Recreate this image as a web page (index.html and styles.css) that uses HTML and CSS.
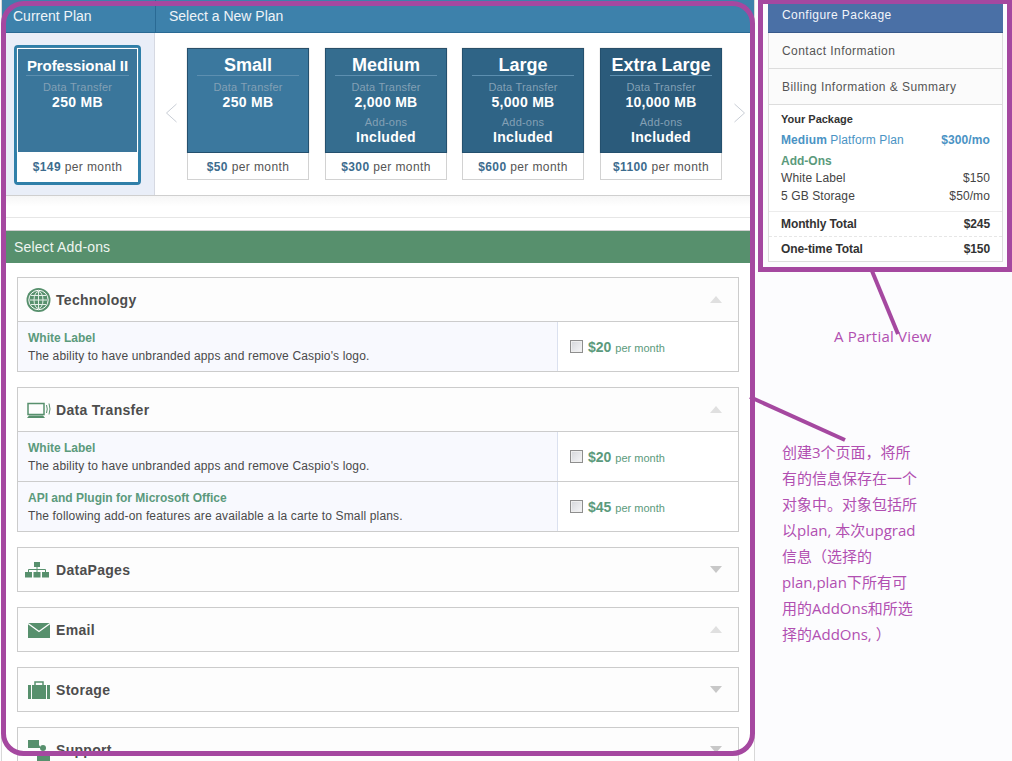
FILE: index.html
```html
<!DOCTYPE html>
<html lang="en">
<head>
  <meta charset="UTF-8">
  <meta name="viewport" content="width=device-width, initial-scale=1.0">
  <title>Upgrade Plan</title>
  <link rel="stylesheet" href="styles.css">
</head>
<body>

<div class="page">
  <div class="main">
    <!-- Plan picker -->
    <div class="plan-head">
      <div class="plan-head-current">Current Plan</div>
      <div class="plan-head-new">Select a New Plan</div>
    </div>
    <div class="plan-row">
      <div class="plan-current">
        <div class="current-card">
          <div class="plan-blue plan-tone0">
            <div class="plan-name plan-name-small">Professional II</div>
            <div class="plan-label">Data Transfer</div>
            <div class="plan-value">250 MB</div>
          </div>
          <div class="plan-price"><b>$149</b> per month</div>
        </div>
      </div>
      <div class="plan-list">
        <svg class="chevron" width="13" height="20" viewBox="0 0 13 20"><path d="M11.5 1 L1.5 10 L11.5 19" fill="none" stroke="#c9ced6"/></svg>
        <div class="plan-card">
          <div class="plan-blue plan-tone1">
            <div class="plan-name">Small</div>
            <div class="plan-label">Data Transfer</div>
            <div class="plan-value">250 MB</div>
          </div>
          <div class="plan-price"><b>$50</b> per month</div>
        </div>
        <div class="plan-card">
          <div class="plan-blue plan-tone2">
            <div class="plan-name">Medium</div>
            <div class="plan-label">Data Transfer</div>
            <div class="plan-value">2,000 MB</div>
            <div class="plan-label plan-label-gap">Add-ons</div>
            <div class="plan-value">Included</div>
          </div>
          <div class="plan-price"><b>$300</b> per month</div>
        </div>
        <div class="plan-card">
          <div class="plan-blue plan-tone3">
            <div class="plan-name">Large</div>
            <div class="plan-label">Data Transfer</div>
            <div class="plan-value">5,000 MB</div>
            <div class="plan-label plan-label-gap">Add-ons</div>
            <div class="plan-value">Included</div>
          </div>
          <div class="plan-price"><b>$600</b> per month</div>
        </div>
        <div class="plan-card">
          <div class="plan-blue plan-tone4">
            <div class="plan-name">Extra Large</div>
            <div class="plan-label">Data Transfer</div>
            <div class="plan-value">10,000 MB</div>
            <div class="plan-label plan-label-gap">Add-ons</div>
            <div class="plan-value">Included</div>
          </div>
          <div class="plan-price"><b>$1100</b> per month</div>
        </div>
        <svg class="chevron" width="13" height="20" viewBox="0 0 13 20"><path d="M1.5 1 L11.5 10 L1.5 19" fill="none" stroke="#c9ced6"/></svg>
      </div>
    </div>
    <div class="spacer-top"></div>
    <div class="spacer-bottom"></div>

    <!-- Add-ons -->
    <div class="addons-head">Select Add-ons</div>
    <div class="addons">

      <div class="addon">
        <div class="addon-head">
          <svg class="addon-icon" width="28" height="26" viewBox="0 0 28 26">
            <circle cx="13.5" cy="13" r="12" fill="#57906d"/>
            <circle cx="13.5" cy="13" r="9.7" fill="none" stroke="#fff" stroke-width="1"/>
            <g fill="none" stroke="#e4efe8" stroke-width="1">
              <ellipse cx="13.5" cy="13" rx="4.5" ry="8.5"/>
              <path d="M13.5 4 V22 M5 13 H22 M6 8.5 H21 M6 17.5 H21"/>
            </g>
          </svg>
          <span class="addon-title">Technology</span>
          <span class="arrow-up"></span>
        </div>
        <div class="addon-row">
          <div class="addon-info">
            <div class="addon-name">White Label</div>
            <div class="addon-desc">The ability to have unbranded apps and remove Caspio's logo.</div>
          </div>
          <label class="addon-price"><input type="checkbox"><b>$20</b> <span>per month</span></label>
        </div>
      </div>

      <div class="addon">
        <div class="addon-head">
          <svg class="addon-icon" width="28" height="26" viewBox="0 0 28 26">
            <rect x="3" y="6.5" width="16" height="11" fill="none" stroke="#57906d" stroke-width="1.5"/>
            <path d="M2 21 L4 18.5 H18 L20 21 Z" fill="#57906d"/>
            <path d="M21.5 8 Q23 12 21.5 16 M24 6.5 Q26 12 24 17.5" fill="none" stroke="#57906d"/>
          </svg>
          <span class="addon-title">Data Transfer</span>
          <span class="arrow-up"></span>
        </div>
        <div class="addon-row">
          <div class="addon-info">
            <div class="addon-name">White Label</div>
            <div class="addon-desc">The ability to have unbranded apps and remove Caspio's logo.</div>
          </div>
          <label class="addon-price"><input type="checkbox"><b>$20</b> <span>per month</span></label>
        </div>
        <div class="addon-row">
          <div class="addon-info">
            <div class="addon-name">API and Plugin for Microsoft Office</div>
            <div class="addon-desc">The following add-on features are available a la carte to Small plans.</div>
          </div>
          <label class="addon-price"><input type="checkbox"><b>$45</b> <span>per month</span></label>
        </div>
      </div>

      <div class="addon">
        <div class="addon-head">
          <svg class="addon-icon" width="28" height="26" viewBox="0 0 28 26">
            <g fill="#57906d">
              <rect x="9" y="5" width="6" height="5"/>
              <rect x="0" y="15" width="7" height="5.5"/>
              <rect x="8.5" y="15" width="7" height="5.5"/>
              <rect x="17" y="15" width="7" height="5.5"/>
            </g>
            <path d="M12 10 V15 M3.5 15 V12.5 H20.5 V15" fill="none" stroke="#57906d"/>
          </svg>
          <span class="addon-title">DataPages</span>
          <span class="arrow-down"></span>
        </div>
      </div>

      <div class="addon">
        <div class="addon-head">
          <svg class="addon-icon" width="28" height="26" viewBox="0 0 28 26">
            <rect x="3" y="6" width="22" height="15" fill="#57906d"/>
            <path d="M3 6.5 L14 14.5 L25 6.5" fill="none" stroke="#fff" stroke-width="1.3"/>
          </svg>
          <span class="addon-title">Email</span>
          <span class="arrow-up"></span>
        </div>
      </div>

      <div class="addon">
        <div class="addon-head">
          <svg class="addon-icon" width="28" height="26" viewBox="0 0 28 26">
            <path d="M10 8 V5 H18 V8" fill="none" stroke="#57906d" stroke-width="1.5"/>
            <g fill="#57906d">
              <rect x="3" y="8" width="3" height="14"/>
              <rect x="7" y="8" width="14" height="14"/>
              <rect x="22" y="8" width="3" height="14"/>
            </g>
          </svg>
          <span class="addon-title">Storage</span>
          <span class="arrow-down"></span>
        </div>
      </div>

      <div class="addon">
        <div class="addon-head">
          <svg class="addon-icon" width="28" height="26" viewBox="0 0 28 26">
            <g fill="#57906d">
              <path d="M3 3 H14 V8 L16 11 H3 Z"/>
              <circle cx="18" cy="11" r="3"/>
              <path d="M12 18 H25 V26 H12 Z"/>
            </g>
          </svg>
          <span class="addon-title">Support</span>
          <span class="arrow-down"></span>
        </div>
      </div>

    </div>
  </div>

  <div class="side">
    <div class="package">
      <div class="tab tab-active">Configure Package</div>
      <div class="tab">Contact Information</div>
      <div class="tab">Billing Information &amp; Summary</div>
      <div class="summary">
        <div class="summary-title">Your Package</div>
        <div class="summary-line summary-plan"><span><b>Medium</b> Platform Plan</span><b>$300/mo</b></div>
        <div class="summary-addons">Add-Ons</div>
        <div class="summary-line"><span>White Label</span><span>$150</span></div>
        <div class="summary-line"><span>5 GB Storage</span><span>$50/mo</span></div>
      </div>
      <div class="total total-monthly"><span>Monthly Total</span><span>$245</span></div>
      <div class="total"><span>One-time Total</span><span>$150</span></div>
    </div>
    <div class="partial-note">A Partial View</div>
    <div class="notes">
      创建3个页面，将所<br>
      有的信息保存在一个<br>
      对象中。对象包括所<br>
      以plan, 本次upgrad<br>
      信息（选择的<br>
      plan,plan下所有可<br>
      用的AddOns和所选<br>
      择的AddOns, ）
    </div>
  </div>

  <!-- Hand drawn annotation on top of the screenshot -->
  <svg class="markup" width="1012" height="761" viewBox="0 0 1012 761">
    <g fill="none" stroke="#a548a0">
      <rect x="3.5" y="3.5" width="749" height="750" rx="20" stroke-width="5"/>
      <rect x="760.5" y="1.5" width="249" height="268" stroke-width="5"/>
      <path d="M872 271 L898 334" stroke-width="4"/>
      <path d="M750 397 L845 440" stroke-width="4"/>
    </g>
  </svg>
</div>

</body>
</html>
```

FILE: styles.css
```css
html, body {
  margin: 0;
  padding: 0;
  height: 100%;
  overflow: hidden;
}
body {
  font-family: "Liberation Sans", Arial, sans-serif;
  font-size: 12px;
  color: #444;
  background-color: #fcfcfe;
}
.page {
  position: relative;
  display: flex;
  width: 1012px;
  height: 761px;
  overflow: hidden;
}
.markup {
  position: absolute;
  left: 0;
  top: 0;
  pointer-events: none;
}

/* left column */
.main {
  width: 752px;
  margin-left: 1px;
  border-left: 1px solid #d8d8d8;
  border-right: 1px solid #d8d8d8;
  background-color: #fff;
  flex: none;
}
.plan-head {
  display: flex;
  height: 32px;
  line-height: 33px;
  background-color: #3d81ab;
  border-bottom: 1px solid #2a6a94;
  color: #eef4f8;
  font-size: 14px;
}
.plan-head-current {
  width: 142px;
  padding-left: 11px;
  border-right: 1px solid #2a6a94;
}
.plan-head-new {
  padding-left: 13px;
}
.plan-row {
  display: flex;
  height: 162px;
  border-bottom: 1px solid #cfcfcf;
}
.plan-current {
  width: 153px;
  flex: none;
  box-sizing: border-box;
  padding: 12px 0 0 12px;
  background-color: #e9eef8;
  border-right: 1px solid #d6d9e2;
}
.current-card {
  width: 121px;
  border: 3px solid #2f7fa9;
  border-radius: 4px;
  background-color: #fff;
}
.current-card .plan-blue {
  height: 103px;
  border: 1px solid #fff;
  border-bottom: 0;
  width: 119px;
}
.current-card .plan-price {
  border: 0;
  height: 30px;
  line-height: 30px;
}
.plan-list {
  display: flex;
  align-items: flex-start;
  padding-top: 15px;
}
.chevron {
  flex: none;
  margin-top: 55px;
}
.plan-list .chevron:first-child {
  margin: 55px 9px 0 10px;
}
.plan-list .chevron:last-child {
  margin: 55px 0 0 11px;
}
.plan-card {
  width: 122px;
  margin-right: 15px;
}
.plan-card:nth-child(2), .plan-card:nth-child(4) {
  margin-right: 16px;
}
.plan-card:nth-last-child(2) {
  margin-right: 0;
}
.plan-blue {
  box-sizing: content-box;
  height: 103px;
  text-align: center;
  color: #fff;
  border: 1px solid #24506e;
  border-top-color: #2a4f68;
  box-shadow: 0 0 1px #aaa;
}
.plan-tone0 { background-color: #3a769b; }
.plan-tone1 { background-color: #3b789e; }
.plan-tone2 { background-color: #356d8f; }
.plan-tone3 { background-color: #2f6486; }
.plan-tone4 { background-color: #2b5b7b; }
.plan-name {
  margin: 0 9px;
  height: 26px;
  line-height: 33px;
  font-size: 18px;
  font-weight: bold;
  border-bottom: 1px solid #5d8fb0;
}
.plan-name-small {
  font-size: 15px;
  margin: 0 8px;
  line-height: 34px;
  letter-spacing: -0.1px;
}
.plan-label {
  margin-top: 4px;
  line-height: 14px;
  font-size: 11px;
  letter-spacing: 0.2px;
  color: #83a0b5;
}
.plan-label-gap {
  margin-top: 5px;
}
.plan-value {
  line-height: 16px;
  font-size: 14px;
  font-weight: bold;
  letter-spacing: 0.3px;
}
.plan-price {
  height: 26px;
  line-height: 28px;
  text-align: center;
  font-size: 12px;
  letter-spacing: 0.4px;
  color: #555;
  background-color: #fff;
  border: 1px solid #d2d2d2;
  border-top: 0;
}
.plan-price b {
  color: #3d6c8e;
}
.spacer-top {
  height: 21px;
  background: linear-gradient(#f6f6f6, #fff 50%);
  border-bottom: 1px solid #e6e6e6;
}
.spacer-bottom {
  height: 12px;
  border-bottom: 1px solid #cfcfcf;
}
.addons-head {
  height: 32px;
  line-height: 32px;
  padding-left: 12px;
  background-color: #57906d;
  color: #eef5f0;
  font-size: 14px;
  letter-spacing: 0.15px;
}
.addons {
  padding: 14px 15px 0;
}
.addon {
  margin-bottom: 15px;
  border: 1px solid #ccc;
  background-color: #fdfdfd;
}
.addon-head {
  display: flex;
  align-items: center;
  height: 43px;
  padding-left: 7px;
  padding-right: 16px;
}
.addon-icon {
  flex: none;
  margin-right: 3px;
}
.addon-title {
  flex: 1;
  font-size: 14px;
  font-weight: bold;
  letter-spacing: 0.3px;
  color: #4d4d4d;
}
.arrow-up, .arrow-down {
  width: 0;
  height: 0;
  border-left: 6px solid transparent;
  border-right: 6px solid transparent;
}
.arrow-up {
  border-bottom: 7px solid #e0e0e0;
}
.arrow-down {
  border-top: 7px solid #c8c8c8;
}
.addon-row {
  display: flex;
  height: 49px;
  border-top: 1px solid #ccc;
}
.addon-info {
  flex: 1;
  box-sizing: border-box;
  padding: 7px 0 0 10px;
  line-height: 18px;
  background-color: #f8f9fe;
  border-right: 1px solid #dbe1ef;
}
.addon-name {
  font-weight: bold;
  color: #5b9a7c;
}
.addon-desc {
  letter-spacing: 0.15px;
  color: #4a4a4a;
}
.addon-price {
  display: flex;
  align-items: center;
  gap: 4px;
  box-sizing: border-box;
  width: 180px;
  padding-left: 12px;
  background-color: #fff;
  color: #5b9a7c;
  font-size: 11px;
}
.addon-price b {
  font-size: 14px;
}
.addon-price span {
  padding-top: 2px;
}
.addon-price input {
  appearance: none;
  width: 13px;
  height: 13px;
  margin: 0 1px 0 0;
  border: 1px solid #8e8e8e;
  background: linear-gradient(135deg, #d4d6da, #f6f6f8);
  box-shadow: inset 0 0 0 1px #eee;
}

/* right column */
.side {
  width: 244px;
  padding-left: 13px;
  flex: none;
}
.package {
  width: 233px;
  border: 1px solid #ddd;
  border-top: 0;
  background-color: #fff;
}
.tab {
  height: 35px;
  line-height: 37px;
  padding-left: 13px;
  border-bottom: 1px solid #ddd;
  background-color: #fbfbfb;
  letter-spacing: 0.45px;
  color: #555;
}
.tab-active {
  height: 32px;
  line-height: 30px;
  margin: 0 -1px;
  padding-left: 14px;
  border-bottom: 1px solid #38598a;
  background-color: #4a70a6;
  color: #f2f5fa;
}
.summary {
  padding: 8px 12px 6px;
  border-bottom: 1px solid #ececec;
}
.summary-title {
  line-height: 13px;
  font-size: 11px;
  font-weight: bold;
  color: #333;
}
.summary-line {
  display: flex;
  justify-content: space-between;
  line-height: 18px;
  letter-spacing: 0.1px;
  color: #444;
}
.summary-plan {
  margin-top: 4px;
  line-height: 20px;
  color: #4a93c4;
}
.summary-addons {
  margin-top: 2px;
  margin-bottom: -1px;
  line-height: 18px;
  font-weight: bold;
  color: #5b9a7c;
}
.total {
  display: flex;
  justify-content: space-between;
  height: 24px;
  line-height: 25px;
  padding: 0 12px;
  font-weight: bold;
  letter-spacing: -0.1px;
  color: #333;
}
.total-monthly {
  border-bottom: 1px dashed #e6e6e6;
}
.partial-note {
  margin-top: 62px;
  padding-left: 66px;
  line-height: 24px;
  font-family: "Open Sans", "Noto Sans CJK SC", sans-serif;
  font-size: 15px;
  letter-spacing: 0.2px;
  color: #b14fb1;
}
.notes {
  margin-top: 91px;
  padding-left: 14px;
  line-height: 26px;
  font-family: "Open Sans", "Noto Sans CJK SC", sans-serif;
  font-size: 15px;
  color: #b14fb1;
  white-space: nowrap;
}
```
